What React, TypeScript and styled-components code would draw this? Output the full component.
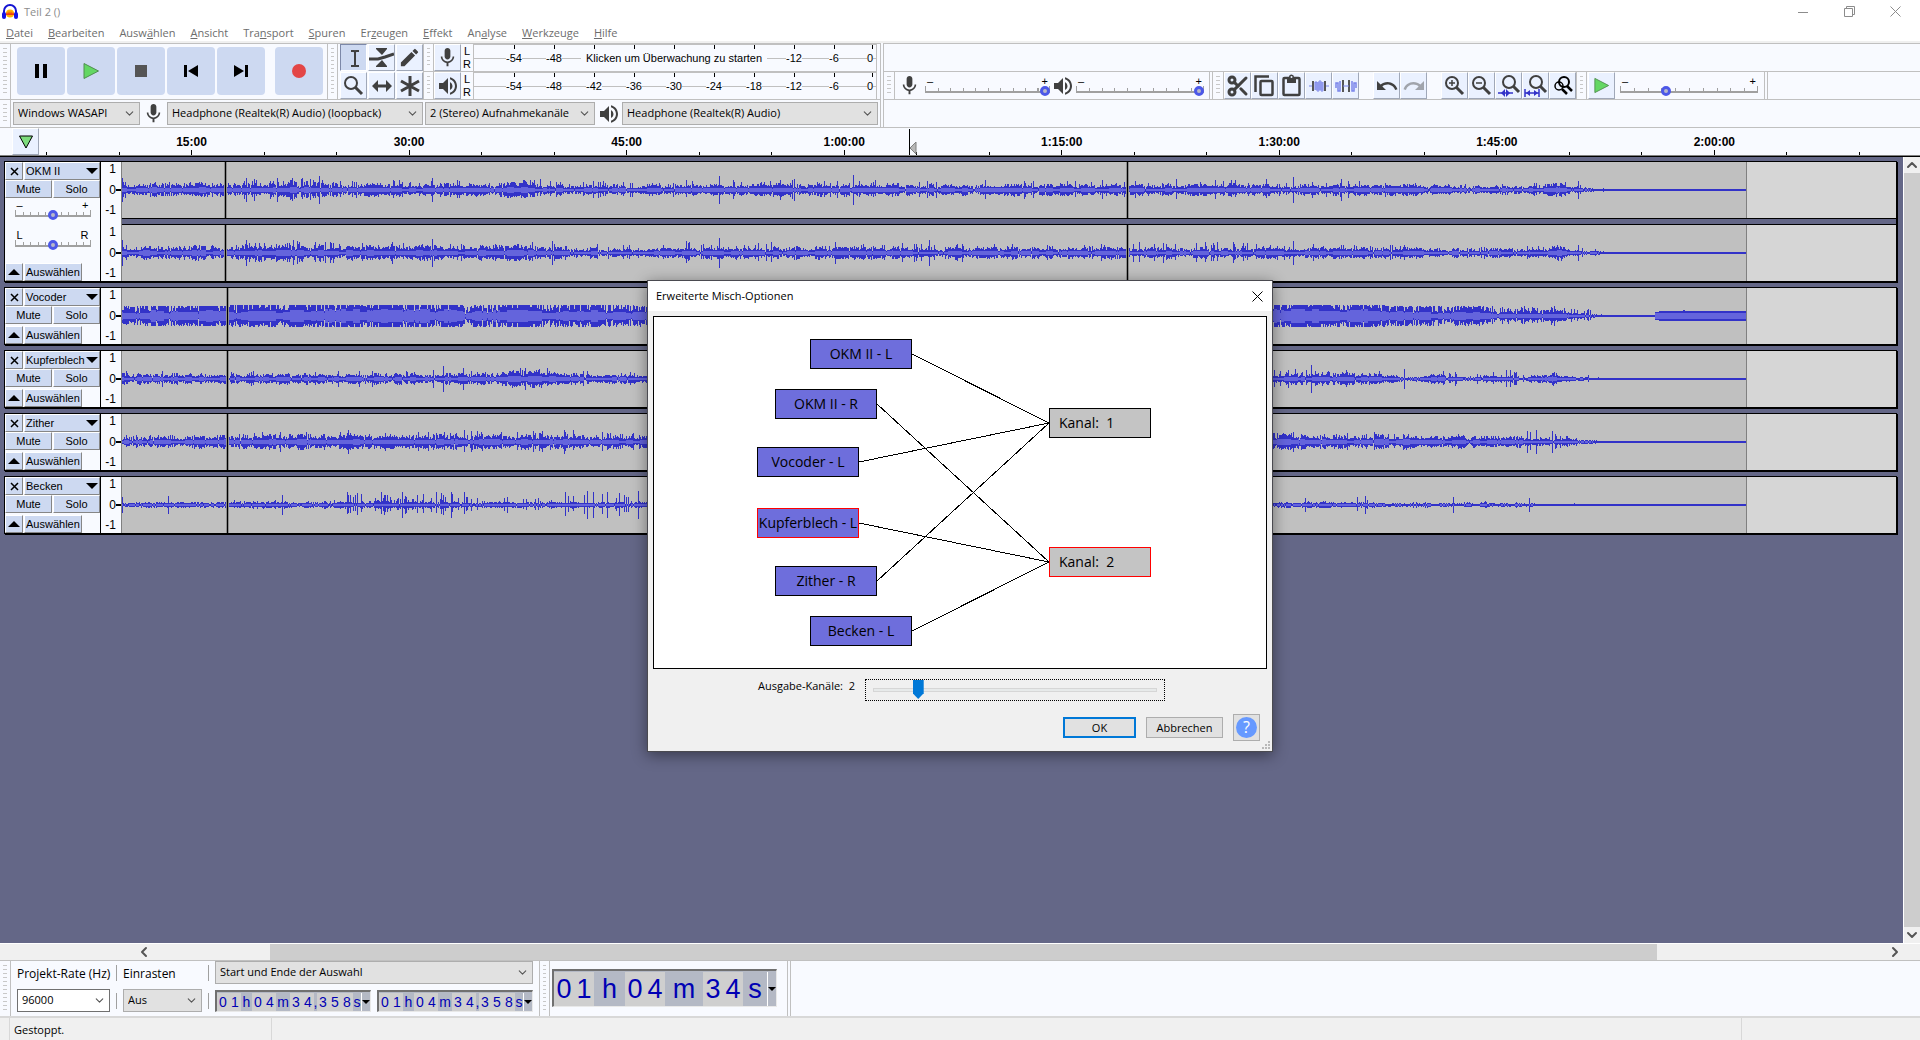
import React from "react";
import styled, { createGlobalStyle, css } from "styled-components";
import { ChevronDown, ChevronLeft, ChevronRight, ChevronUp, Scissors } from "lucide-react";
import { MdEdit, MdMic, MdRedo, MdUndo, MdVolumeUp } from "react-icons/md";

const ui = '"Open Sans", "Noto Sans", sans-serif';
const arial = '"Liberation Sans", Arial, sans-serif';
const line = "#c0c0c0";
const paper = "#f8faff";
const slate = "#646787";
const soft = "#cdd9f1";
const ink = "#404040";

const GlobalStyle = createGlobalStyle`
  * { box-sizing: border-box; }
  body { margin: 0; background: ${slate}; }
  button, select, input { font: inherit; color: inherit; margin: 0; padding: 0; border-radius: 0; }
  button { cursor: default; }
  svg { display: block; flex: none; }
`;

const Window = styled.div`
  position: relative;
  display: flex;
  flex-direction: column;
  height: 100vh;
  overflow: hidden;
  font: 11px/16px ${ui};
  color: #000;
`;

/* ---------- title and menu ---------- */

const TitleBar = styled.header`
  display: flex;
  align-items: center;
  gap: 6px;
  height: 23px;
  padding: 0 15px 0 2px;
  background: #fff;
  color: #8c8c8c;
`;
const Title = styled.h1`
  flex: 1;
  margin: 0;
  font: inherit;
`;
const WindowButtons = styled.div`
  display: flex;
  gap: 26px;
`;
const PlainButton = styled.button`
  display: flex;
  align-items: center;
  justify-content: center;
  width: 20px;
  height: 20px;
  border: 0;
  background: none;
`;
const MenuBar = styled.nav`
  display: flex;
  gap: 15px;
  height: 20px;
  padding: 2px 6px 0;
  border-bottom: 2px solid #f0f0f0;
  background: #fff;
`;
const MenuLink = styled.a`
  color: #6d6d6d;
  text-decoration: none;
`;

/* ---------- toolbars ---------- */

const Dock = styled.div`
  display: flex;
  background: ${paper};
`;
const DockLeft = styled.div`
  display: flex;
  flex-direction: column;
  border-right: 1px solid ${line};
`;
const DockRight = styled.div`
  display: flex;
  flex: 1;
  flex-direction: column;
  margin-left: 2px;
  border-left: 1px solid ${line};
`;
const DockRow = styled.div<{ $tall?: boolean }>`
  display: flex;
  height: ${(p) => (p.$tall ? 56 : 28)}px;
  border-top: 1px solid ${line};
`;
const Bar = styled.section<{ $gap?: number; $pad?: string; $top?: boolean }>`
  display: flex;
  align-items: ${(p) => (p.$top ? "flex-start" : "center")};
  gap: ${(p) => p.$gap ?? 0}px;
  padding: ${(p) => p.$pad ?? "0"};
`;
const Grabber = styled.div<{ $left?: boolean }>`
  align-self: stretch;
  flex: none;
  width: 11px;
  padding: 4px 3px;
  border-right: 1px solid ${line};
  border-left: ${(p) => (p.$left ? `1px solid ${line}` : "0")};
  background: repeating-linear-gradient(#c8c8c8 0 1px, transparent 1px 4px) content-box;
`;
const EndLine = styled.div`
  align-self: stretch;
  width: 4px;
  border: solid ${line};
  border-width: 0 1px;
`;
const TransportButton = styled.button<{ $apart?: boolean }>`
  display: flex;
  align-items: center;
  justify-content: center;
  width: 48px;
  height: 48px;
  margin-left: ${(p) => (p.$apart ? 8 : 0)}px;
  border: 0;
  border-radius: 4px;
  background: ${soft};
`;
const ToolGrid = styled.div`
  display: grid;
  grid-template-columns: repeat(3, 27px);
  gap: 1px;
`;
const ToolButton = styled.button<{ $down?: boolean }>`
  display: flex;
  align-items: center;
  justify-content: center;
  width: 27px;
  height: 27px;
  border: 1px solid;
  border-color: ${(p) => (p.$down ? "#7c88a8 #fff #fff #7c88a8" : "#fff #a0a8b8 #a0a8b8 #fff")};
  background: ${(p) => (p.$down ? soft : "#eaf1ff")};
  color: ${ink};
`;
const ButtonRun = styled.div`
  display: flex;
`;

const Meters = styled.div`
  display: flex;
  flex-direction: column;
  padding-right: 3px;
`;
const MeterRow = styled.section`
  display: flex;
  align-items: center;
  height: 27px;
  & + & {
    height: 28px;
    border-top: 1px solid ${line};
  }
`;
const ChannelNames = styled.div`
  width: 12px;
  font: 11px/13px ${arial};
  text-align: center;
`;
const MeterScale = styled.div`
  display: flex;
  justify-content: flex-end;
  position: relative;
  width: 404px;
  height: 27px;
  border: solid ${line};
  border-width: 1px 1px 0 1px;
  background: linear-gradient(${line}, ${line}) 0 13px / 100% 1px no-repeat;
  font: 11px/13px ${arial};
`;
const MeterMark = styled.div<{ $end?: boolean }>`
  display: flex;
  flex: none;
  flex-direction: column;
  align-items: ${(p) => (p.$end ? "flex-end" : "center")};
  width: ${(p) => (p.$end ? 22 : 40)}px;
  padding: 0 ${(p) => (p.$end ? 3 : 0)}px;
  &::before {
    content: "";
    width: 1px;
    height: 4px;
    margin-bottom: 3px;
    background: #000;
  }
`;
const MarkText = styled.span`
  background: ${paper};
`;
const MeterHint = styled.button`
  position: absolute;
  top: 5px;
  left: 107px;
  height: 16px;
  padding: 0 5px;
  border: 0;
  background: ${paper};
  white-space: nowrap;
`;

const SelectBox = styled.div<{ $w: number; $edit?: boolean }>`
  display: grid;
  width: ${(p) => p.$w}px;
  height: 23px;
  border: 1px solid ${(p) => (p.$edit ? "#707070" : "#adadad")};
  background: ${(p) => (p.$edit ? "#fff" : "#e1e1e1")};
  & > * {
    grid-area: 1 / 1;
  }
  & > svg {
    place-self: center end;
    margin-right: 3px;
    pointer-events: none;
    color: #555;
  }
`;
const fieldText = css`
  width: 100%;
  padding: 0 20px 1px 4px;
  border: 0;
  outline: 0;
  appearance: none;
  background: none;
`;
const NativeSelect = styled.select`
  ${fieldText}
`;
const NativeInput = styled.input`
  ${fieldText}
`;
const IconSlot = styled.span<{ $w: number }>`
  display: flex;
  justify-content: center;
  width: ${(p) => p.$w}px;
  color: ${ink};
`;

/* ---------- small sliders ---------- */

const SliderBox = styled.label<{ $w: number }>`
  display: flex;
  flex-direction: column;
  width: ${(p) => p.$w}px;
`;
const SliderEnds = styled.span`
  display: flex;
  justify-content: space-between;
  padding: 0 2px;
  font: 11px/10px ${arial};
`;
const knob = css`
  appearance: none;
  width: 10px;
  height: 10px;
  border: 3px solid #4c58e8;
  border-radius: 50%;
  background: #b8b8c8;
`;
const Range = styled.input`
  appearance: none;
  width: 100%;
  height: 10px;
  background:
    linear-gradient(#a0a0a0, #a0a0a0) 0 5px / 100% 2px no-repeat,
    repeating-linear-gradient(90deg, #a0a0a0 0 1px, transparent 1px 10%) 0 2px / 100% 3px no-repeat,
    linear-gradient(#a0a0a0, #a0a0a0) 100% 0 / 1px 5px no-repeat,
    linear-gradient(#a0a0a0, #a0a0a0) 0 0 / 1px 5px no-repeat;
  &::-webkit-slider-thumb {
    ${knob}
  }
`;

/* ---------- time ruler ---------- */

const Ruler = styled.div`
  display: flex;
  position: relative;
  height: 30px;
  border-top: 1px solid ${line};
  border-bottom: 1px solid #000;
  background: ${paper};
`;
const PinCell = styled.div`
  width: 39px;
  padding: 0 0 0 12px;
  border-bottom: 1px solid #808080;
`;
const RulerTicks = styled.div`
  display: flex;
  flex: 1;
  justify-content: space-between;
  align-items: flex-end;
  padding: 0 60px 0 7px;
  border-bottom: 1px solid #808080;
`;
const Tick = styled.div<{ $major?: boolean }>`
  display: flex;
  flex-direction: column;
  align-items: center;
  width: 1px;
  font: bold 12px/16px ${arial};
  &::after {
    content: "";
    width: 1px;
    height: ${(p) => (p.$major ? 5 : 3)}px;
    background: #000;
  }
`;
const PlayCursor = styled.div`
  position: absolute;
  top: 1px;
  left: 909px;
`;

/* ---------- tracks ---------- */

const Workspace = styled.main`
  display: flex;
  flex: 1;
  min-height: 0;
`;
const TrackList = styled.div`
  display: flex;
  flex: 1;
  flex-direction: column;
  gap: 5px;
  min-width: 0;
  padding: 4px 6px 0 4px;
  background: ${slate};
`;
const TrackRow = styled.article`
  display: flex;
  border: 1px solid #000;
  box-shadow: 1px 1px 0 #000;
`;
const Panel = styled.div`
  display: flex;
  flex-direction: column;
  width: 96px;
  border-right: 1px solid #000;
  background: ${paper};
`;
const PanelRow = styled.div<{ $last?: boolean }>`
  display: flex;
  gap: 1px;
  margin-top: ${(p) => (p.$last ? "auto" : "0")};
  padding-right: ${(p) => (p.$last ? 18 : 0)}px;
`;
const PanelButton = styled.button<{ $fixed?: boolean; $start?: boolean }>`
  display: flex;
  align-items: center;
  justify-content: ${(p) => (p.$start ? "space-between" : "center")};
  flex: ${(p) => (p.$fixed ? "none" : "1 1 0")};
  min-width: 0;
  width: ${(p) => (p.$fixed ? "18px" : "auto")};
  height: 18px;
  padding: ${(p) => (p.$start ? "0 1px" : "0")};
  overflow: hidden;
  border: 1px solid;
  border-color: #fff #868686 #868686 #fff;
  background: ${soft};
  font: 11px/16px ${arial};
`;
const PanelSliders = styled.div`
  display: flex;
  flex: 1;
  flex-direction: column;
  align-items: center;
  gap: 10px;
  padding-top: 2px;
`;
const Scales = styled.div`
  display: flex;
  flex-direction: column;
  gap: 7px;
  width: 21px;
  border-right: 1px solid #808080;
  background: ${paper};
`;
const Scale = styled.div`
  display: flex;
  flex-direction: column;
  justify-content: space-between;
  align-items: flex-end;
  height: 56px;
  padding: 0 5px 1px 0;
  background: linear-gradient(#000, #000) 100% 27px / 5px 2px no-repeat;
  font: 12px/14px ${arial};
`;
const Channels = styled.div`
  flex: 1;
  min-width: 0;
`;
const Channel = styled.div`
  height: 56px;
  overflow: hidden;
  background: #d6d6d6;
`;
const ChannelGap = styled.div`
  height: 7px;
  border: solid #000;
  border-width: 1px 0;
  background: ${slate};
`;

/* ---------- scroll bars ---------- */

const VScroll = styled.div`
  display: flex;
  flex-direction: column;
  align-items: center;
  width: 17px;
  border-left: 1px solid #fff;
  background: #f0f0f0;
  color: #555;
`;
const HScroll = styled.div`
  display: flex;
  align-items: center;
  height: 17px;
  padding-left: 136px;
  border-top: 1px solid #fff;
  background: #f0f0f0;
  color: #555;
`;
const Thumb = styled.div`
  flex: 1;
  width: 100%;
  background: #cdcdcd;
`;
const HTrack = styled.div`
  display: flex;
  flex: 1;
  align-self: stretch;
  padding: 0 230px 0 118px;
`;

/* ---------- selection bar ---------- */

const SelectionBar = styled.footer`
  display: flex;
  height: 58px;
  border-top: 1px solid ${line};
  border-bottom: 2px solid #d8d8d8;
  background: ${paper};
`;
const SelectionGrid = styled.div`
  display: grid;
  grid-template-columns: 93px 1px 79px 1px 318px;
  grid-template-rows: 23px 23px;
  align-items: center;
  gap: 5px 6px;
  padding: 0 6px 4px;
`;
const SelectionLabel = styled.label`
  padding-top: 2px;
  font-size: 12px;
  white-space: nowrap;
`;
const Divider = styled.div`
  width: 1px;
  height: 16px;
  background: #a0a0a0;
`;
const TimePair = styled.div`
  display: flex;
  gap: 6px;
`;
const TimeBox = styled.div<{ $big?: boolean }>`
  display: flex;
  height: ${(p) => (p.$big ? 38 : 22)}px;
  padding-top: 1px;
  border: solid;
  border-width: 2px 1px 1px 2px;
  border-color: #707070 #e8e8e8 #e8e8e8 #707070;
  background: #b4b9c5;
  color: #0000b4;
  font: ${(p) => (p.$big ? "27px/34px" : "14px/18px")} ${arial};
`;
const Digits = styled.span<{ $n: number; $big?: boolean }>`
  display: grid;
  grid-template-columns: repeat(${(p) => p.$n}, 1fr);
  width: ${(p) => p.$n * (p.$big ? 20 : 12)}px;
  background: #cfcfcf;
  text-align: center;
`;
const Unit = styled.span<{ $w: number }>`
  display: flex;
  justify-content: center;
  width: ${(p) => p.$w}px;
`;
const TimeMenu = styled.button`
  width: 9px;
  border: 0;
  border-left: 1px solid #fff;
  background: none;
`;
const BigTime = styled.div`
  display: flex;
  align-items: center;
  padding: 0 10px 2px 2px;
`;
const StatusBar = styled.div`
  display: flex;
  height: 22px;
  padding-left: 9px;
  background: #f0f0f0;
  line-height: 23px;
`;
const StatusCell = styled.div<{ $w?: number }>`
  width: ${(p) => (p.$w ? `${p.$w}px` : "auto")};
  flex: ${(p) => (p.$w ? "none" : 1)};
  padding-left: 4px;
  border-left: 1px solid #d8d8d8;
`;

/* ---------- dialog ---------- */

const Overlay = styled.div`
  display: flex;
  position: absolute;
  inset: 0;
  align-items: center;
  justify-content: center;
  padding-bottom: 8px;
`;
const Dialog = styled.div`
  display: flex;
  position: relative;
  flex-direction: column;
  width: 626px;
  border: 1px solid #4a4a50;
  background: #f0f0f0;
  box-shadow: 0 3px 14px rgba(0, 0, 0, 0.45);
`;
const DialogTitle = styled.div`
  display: flex;
  align-items: center;
  justify-content: space-between;
  height: 30px;
  padding: 0 5px 0 8px;
  background: #fff;
`;
const DialogName = styled.h2`
  margin: 0;
  font: inherit;
`;
const MixCanvas = styled.div`
  position: relative;
  height: 353px;
  margin: 5px 5px 0;
  border: 1px solid #000;
  background: #fff;
`;
const Node = styled.button<{ $x: number; $y: number; $kind: "track" | "channel"; $on?: boolean }>`
  position: absolute;
  left: ${(p) => p.$x}px;
  top: ${(p) => p.$y}px;
  width: 102px;
  height: 30px;
  padding: ${(p) => (p.$kind === "track" ? "0" : "0 0 0 9px")};
  border: 1px solid ${(p) => (p.$on ? "#f00" : "#000")};
  background: ${(p) => (p.$kind === "track" ? "#6e6edc" : "#c4c4c4")};
  font-size: 14px;
  line-height: 28px;
  text-align: ${(p) => (p.$kind === "track" ? "center" : "left")};
  white-space: pre;
`;
const ChannelRow = styled.div`
  display: flex;
  gap: 10px;
  padding: 10px 107px 0 0;
  justify-content: flex-end;
`;
const ChannelLabel = styled.label`
  line-height: 14px;
  white-space: pre;
`;
const DialogRange = styled.input`
  appearance: none;
  width: 300px;
  height: 22px;
  padding: 0 7px;
  border: 1px dotted #000;
  outline: 0;
  background: none;
  &::-webkit-slider-runnable-track {
    height: 4px;
    border: 1px solid #d6d6d6;
    background: #e7eaea;
  }
  &::-webkit-slider-thumb {
    appearance: none;
    width: 11px;
    height: 19px;
    margin-top: -9px;
    background: #0078d7;
    clip-path: polygon(0 0, 100% 0, 100% 70%, 50% 100%, 0 70%);
  }
`;
const DialogButtons = styled.div`
  display: flex;
  align-items: center;
  justify-content: flex-end;
  gap: 10px;
  padding: 13px 12px 10px;
`;
const DialogButton = styled.button<{ $w: number; $main?: boolean }>`
  width: ${(p) => p.$w}px;
  height: 21px;
  border: ${(p) => (p.$main ? "2px solid #0078d7" : "1px solid #adadad")};
  background: #e1e1e1;
  line-height: 15px;
`;
const HelpButton = styled.button`
  display: flex;
  align-items: center;
  justify-content: center;
  width: 27px;
  height: 27px;
  border: 1px solid #adadad;
  background: #e1e1e1;
`;
const HelpDisc = styled.span`
  width: 21px;
  height: 21px;
  border-radius: 50%;
  background: #6699ff;
  color: #fff;
  font-size: 16px;
  line-height: 21px;
`;
const Grip = styled.span`
  position: absolute;
  right: 2px;
  bottom: 2px;
`;

/* ---------- drawings ---------- */

const Svg = ({ w = 24, h = w, box, children }: { w?: number; h?: number; box?: string; children: React.ReactNode }) => (
  <svg width={w} height={h} viewBox={box ?? `0 0 ${w} ${h}`} aria-hidden="true">
    {children}
  </svg>
);

const Logo = () => (
  <Svg w={16}>
    <path d="M2 11V7a6 6 0 0 1 12 0v4" fill="none" stroke="#1414d2" strokeWidth="2" />
    <rect x="0" y="8" width="4" height="7" rx="2" fill="#1414e6" />
    <rect x="12" y="8" width="4" height="7" rx="2" fill="#1414e6" />
    <ellipse cx="8" cy="9.500" rx="4" ry="4" fill="#ffb400" />
    <path d="M4 10l1-2 1 2 1-3 1 3 1-3 1 3 1-2 1 2v1H4z" fill="#f03c14" />
  </Svg>
);
const PlayIcon = ({ size }: { size: number }) => (
  <Svg w={size} box="0 0 18 18">
    <path d="M2 1.500v15L16.500 9z" fill="#63d763" stroke="#4f8f4f" strokeWidth="1" />
  </Svg>
);
const DownTriangle = ({ w = 12, h = 6 }: { w?: number; h?: number }) => (
  <Svg w={w} h={h} box="0 0 12 6">
    <path d="M0 0h12L6 6z" fill="#000" />
  </Svg>
);
const Lens = ({ sign }: { sign?: string }) => (
  <Svg w={23}>
    <circle cx="9" cy="9" r="6" fill="none" stroke={ink} strokeWidth="2" />
    <path d="M13 13l7 7" stroke={ink} strokeWidth="3" />
    {sign && <path d={sign} stroke={ink} strokeWidth="1.500" />}
  </Svg>
);

const glyph = {
  pause: <Svg w={14}><path d="M1 0h4v14H1zM9 0h4v14H9z" /></Svg>,
  stop: <Svg w={12}><path d="M0 0h12v12H0z" fill="#555" /></Svg>,
  start: <Svg w={14}><path d="M0 1h3v12H0zM14 1v12L4 7z" /></Svg>,
  end: <Svg w={14}><path d="M11 1h3v12h-3zM0 1v12l10-6z" /></Svg>,
  record: <Svg w={14}><circle cx="7" cy="7" r="7" fill="#e34646" /></Svg>,
  cursor: (
    <Svg w={20}>
      <path d="M7 3h3l1 1 1-1h3M7 18h3l1-1 1 1h3M11 4v13" fill="none" stroke={ink} strokeWidth="2" />
    </Svg>
  ),
  envelope: (
    <Svg w={25}>
      <path d="M0 14h9l7-2 9-3" fill="none" stroke={ink} strokeWidth="3" />
      <path d="M7 3h11v1l-5 6-6-6zM7 22h11v-1l-5-6-6 6z" fill={ink} />
    </Svg>
  ),
  shift: (
    <Svg w={22}>
      <path d="M5 11h12" stroke={ink} strokeWidth="3" />
      <path d="M7 5v12l-6-6zM15 5v12l6-6z" fill={ink} />
    </Svg>
  ),
  multi: (
    <Svg w={22}>
      <path d="M11 1v20M2 6l18 10M20 6L2 16" stroke={ink} strokeWidth="3" />
    </Svg>
  ),
  copy: (
    <Svg w={23}>
      <path d="M2.500 18V2.500H16" fill="none" stroke={ink} strokeWidth="2.500" />
      <rect x="7.500" y="7" width="12" height="14" rx="1" fill="none" stroke={ink} strokeWidth="2.500" />
    </Svg>
  ),
  paste: (
    <Svg w={23}>
      <rect x="3.500" y="4" width="16" height="17" rx="1" fill="none" stroke={ink} strokeWidth="2.500" />
      <path d="M7 3h2a2.500 2.500 0 0 1 5 0h2v6H7z" fill={ink} />
      <circle cx="11.500" cy="3" r="1" fill="#eaf1ff" />
    </Svg>
  ),
  trim: (
    <Svg w={22}>
      <path d="M1 11h4M17 11h4" stroke="#7a84ea" strokeWidth="1" />
      <path d="M5 6v10M17 6v10" stroke="#555" strokeWidth="2" />
      <path d="M7 15V7h2v9h2V6h2v10h2V7" fill="none" stroke="#7a84ea" strokeWidth="1" />
      <path d="M7 7h8v8H7z" fill="#7a84ea" opacity="0.6" />
    </Svg>
  ),
  silence: (
    <Svg w={22}>
      <path d="M1 13V8h2v8h2V6M17 6v10h2V8h2v5" fill="none" stroke="#7a84ea" strokeWidth="1.500" />
      <path d="M8 5v12M14 5v12" stroke="#555" strokeWidth="2" />
      <path d="M8 11h6" stroke="#7a84ea" strokeWidth="1" />
    </Svg>
  ),
  zoomSelection: (
    <Svg w={25}>
      <circle cx="13" cy="9" r="6" fill="none" stroke={ink} strokeWidth="2" />
      <path d="M17 13l6 6" stroke={ink} strokeWidth="3" />
      <path d="M2 20h15" stroke="#3232c8" strokeWidth="1.500" />
      <path d="M9 16v8l-4-4zM10 16v8l4-4z" fill="#3232c8" />
    </Svg>
  ),
  zoomFit: (
    <Svg w={25}>
      <circle cx="13" cy="9" r="6" fill="none" stroke={ink} strokeWidth="2" />
      <path d="M17 13l6 6" stroke={ink} strokeWidth="3" />
      <path d="M2 20h14M2 16v8M16 16v8" stroke="#3232c8" strokeWidth="1.500" />
      <path d="M7 17v6l-4-3zM11 17v6l4-3z" fill="#3232c8" />
    </Svg>
  ),
  zoomToggle: (
    <Svg w={22}>
      <circle cx="12" cy="7" r="5" fill="none" stroke="#000" strokeWidth="2" />
      <circle cx="7" cy="11" r="4" fill="none" stroke="#000" strokeWidth="1.500" />
      <path d="M15 11l5 5M10 14l5 5" stroke="#000" strokeWidth="2.500" />
    </Svg>
  ),
};

/* ---------- wave forms ---------- */

// [x, body height, spike height, spike chance], heights in pixels either side of the axis
type Point = [number, number, number, number];

const END = 1624;
const QUIET = 1482;

function buildWave(points: Point[], seed: number, hits: [number, number][], rms: number) {
  let s = seed;
  const rnd = () => {
    s = (s * 1664525 + 1013904223) % 4294967296;
    return s / 4294967296;
  };
  let peak = "";
  let body = "";
  let swell = 1;
  for (let x = 0; x < QUIET; x++) {
    let i = 0;
    while (i < points.length - 2 && points[i + 1][0] <= x) i++;
    const a = points[i];
    const b = points[i + 1];
    const t = Math.min(1, (x - a[0]) / (b[0] - a[0]));
    const base = a[1] + (b[1] - a[1]) * t;
    if (x % 7 === 0) swell = 0.55 + rnd() * 0.5;
    let up = base * swell * (0.7 + rnd() * 0.6);
    let down = base * swell * (0.7 + rnd() * 0.6);
    if (rnd() < a[3] * 1.8) {
      const k = base + (a[2] - base) * Math.pow(rnd(), 1.5);
      up = Math.max(up, k);
      down = Math.max(down, k * (0.6 + rnd() * 0.4));
    }
    if (rnd() < 0.1) {
      up *= 0.5;
      down *= 0.5;
    }
    up = Math.min(up, a[2]);
    down = Math.min(down, a[2]);
    const hit = hits.find((h) => h[0] === x);
    if (hit) {
      up = hit[1];
      down = hit[1];
    }
    const u = Math.max(1, Math.round(up));
    const d = Math.max(1, Math.round(down));
    peak += `M${x} ${28 - u}h1v${u + d}h-1z`;
    const r = Math.round(Math.min(base * rms * swell, Math.min(u, d) - 1));
    if (r > 0) body += `M${x} ${28 - r}h1v${2 * r}h-1z`;
  }
  return { peak, body };
}

const okm: Point[] = [
  [0, 8, 13, 0.3], [5, 5, 6, 0.1], [20, 6, 8, 0.15], [104, 6, 9, 0.1], [110, 6, 11, 0.15], [170, 8, 13, 0.15],
  [220, 6, 10, 0.12], [345, 6, 9, 0.1], [400, 7, 11, 0.12], [433, 5, 9, 0.12], [510, 4, 9, 0.1], [560, 5, 12, 0.1],
  [620, 5, 11, 0.1], [760, 6, 12, 0.12], [800, 5, 10, 0.12], [1010, 5, 11, 0.12], [1150, 5, 9, 0.08], [1285, 5, 8, 0.08],
  [1300, 4, 6, 0.1], [1400, 4, 7, 0.1], [1420, 3, 7, 0.2], [1434, 8, 9, 0.1], [1446, 3, 6, 0.1], [1470, 2, 4, 0.1], [QUIET, 1, 3, 0.1],
];
const vocoder: Point[] = [
  [0, 11, 10, 0.3], [10, 9, 10, 0.3], [30, 12, 10, 0.3], [105, 12, 11, 0.3], [240, 15, 11, 0.2], [330, 15, 11, 0.2], [345, 9, 11, 0.3],
  [390, 13, 11, 0.3], [480, 12, 11, 0.3], [530, 8, 11, 0.3], [700, 11, 11, 0.3], [1150, 14, 11, 0.2], [1250, 14, 11, 0.3], [1264, 9, 10, 0.4],
  [1360, 9, 10, 0.3], [1380, 4, 10, 0.4], [1430, 5, 10, 0.3], [1450, 4, 8, 0.3], [1470, 2, 3, 0.1], [QUIET, 1, 2, 0.1],
];
const kupfer: Point[] = [
  [0, 6, 8, 0.3], [6, 3, 6, 0.2], [16, 5, 8, 0.1], [105, 4, 8, 0.1], [225, 5, 11, 0.1], [345, 5, 12, 0.12], [400, 8, 12, 0.15],
  [435, 6, 10, 0.1], [470, 4, 8, 0.1], [700, 5, 10, 0.1], [1150, 4, 10, 0.12], [1185, 6, 10, 0.1], [1240, 5, 9, 0.08], [1290, 2, 7, 0.1],
  [1310, 5, 8, 0.1], [1340, 2, 7, 0.15], [1380, 4, 9, 0.15], [1400, 2, 4, 0.1], [1430, 6, 7, 0.1], [1446, 3, 5, 0.1], [1470, 1, 3, 0.1], [QUIET, 1, 2, 0.1],
];
const zither: Point[] = [
  [0, 6, 8, 0.2], [10, 5, 7, 0.1], [105, 6, 10, 0.12], [225, 7, 11, 0.1], [310, 7, 12, 0.1], [480, 6, 10, 0.1], [700, 6, 10, 0.1],
  [1150, 7, 11, 0.12], [1280, 6, 8, 0.08], [1350, 5, 8, 0.15], [1400, 5, 11, 0.15], [1420, 4, 9, 0.1], [1450, 3, 9, 0.1], [1470, 2, 4, 0.1], [QUIET, 1, 2, 0.1],
];
const becken: Point[] = [
  [0, 3, 6, 0.1], [6, 2, 3, 0.1], [105, 3, 5, 0.1], [225, 3, 13, 0.25], [345, 3, 9, 0.08], [430, 3, 13, 0.1], [530, 3, 12, 0.1],
  [1150, 3, 4, 0.06], [1230, 3, 8, 0.08], [1270, 2, 4, 0.06], [1360, 2, 7, 0.08], [1400, 2, 6, 0.06], [1420, 1, 2, 0.1], [QUIET, 1, 1, 0.05],
];

const none: [number, number][] = [];
const hitsA: [number, number][] = [[0, 12], [124, 12], [132, 11], [155, 12], [197, 14], [310, 12], [597, 14], [672, 11], [731, 15], [1171, 13], [1219, 11], [1456, 9]];
const hitsB: [number, number][] = [[0, 13], [124, 13], [270, 11], [310, 14], [430, 12], [597, 15], [807, 13], [1171, 12], [1456, 8]];
const hitsK: [number, number][] = [[40, 8], [321, 13], [341, 11], [1189, 14], [1282, 10]];
const hitsZ: [number, number][] = [[158, 10], [226, 12], [442, 12], [1405, 11], [1414, 12], [1430, 11]];
const hitsC: [number, number][] = [[0, 8], [46, 9], [160, 10], [280, 13], [329, 13], [465, 14], [471, 13], [485, 13], [516, 14], [1183, 7], [1243, 9], [1331, 8], [1407, 7]];

interface WaveProps {
  points: Point[];
  seed: number;
  hits?: [number, number][];
  cuts: number[];
  rms?: number;
  tone?: boolean;
}
const Wave = ({ points, seed, hits = none, cuts, rms = 0.42, tone }: WaveProps) => {
  const { peak, body } = React.useMemo(() => buildWave(points, seed, hits, rms), [points, seed, hits, rms]);
  return (
    <svg width={END + 1} height="56" shapeRendering="crispEdges" aria-hidden="true">
      <path d={`M0 0h${END}v56H0z`} fill="#c0c0c0" />
      <path d={peak} fill="#3232c8" />
      <path d={`M${QUIET} 27h${END - QUIET}v2h-${END - QUIET}z`} fill="#3232c8" />
      <path d={body} fill="#6464dc" />
      {tone && (
        <>
          <path d="M1533 24h4v-1h24v-1h2v1h61v10h-87v-1h-4z" fill="#3232c8" />
          <path d="M1533 25h91v6h-91z" fill="#6464dc" />
        </>
      )}
      {cuts.map((x) => (
        <g key={x}>
          <path d={`M${x - 1} 0h3v56h-3z`} fill="#8c8c8c" />
          <path d={`M${x} 0h1v56h-1z`} fill="#000" />
        </g>
      ))}
      <path d={`M${END} 0h1v56h-1z`} fill="#808080" />
    </svg>
  );
};

/* ---------- composed parts ---------- */

const Select = ({ label, value, w, id }: { label: string; value: string; w: number; id?: string }) => (
  <SelectBox $w={w}>
    <NativeSelect id={id} aria-label={label} defaultValue={value}>
      <option>{value}</option>
    </NativeSelect>
    <ChevronDown size={13} strokeWidth={2} />
  </SelectBox>
);

const MiniSlider = ({ label, w, value, ends = ["–", "+"] }: { label: string; w: number; value: number; ends?: string[] }) => (
  <SliderBox $w={w}>
    <SliderEnds>
      <span>{ends[0]}</span>
      <span>{ends[1]}</span>
    </SliderEnds>
    <Range type="range" aria-label={label} defaultValue={value} />
  </SliderBox>
);

const Meter = ({ label, icon, hint }: { label: string; icon: React.ReactNode; hint?: string }) => (
  <MeterRow>
    <Grabber $left />
    <ToolButton aria-label={label}>{icon}</ToolButton>
    <ChannelNames>
      <div>L</div>
      <div>R</div>
    </ChannelNames>
    <MeterScale>
      {["-54", "-48", "-42", "-36", "-30", "-24", "-18", "-12", "-6", "0"].map((m) => (
        <MeterMark key={m} $end={m === "0"}>{!(hint && /-(42|36|30|24|18)/.test(m)) && <MarkText>{m}</MarkText>}</MeterMark>
      ))}
      {hint && <MeterHint>{hint}</MeterHint>}
    </MeterScale>
  </MeterRow>
);

const Track = ({ name, stereo, children }: { name: string; stereo?: boolean; children: React.ReactNode }) => {
  const waves = React.Children.toArray(children);
  return (
    <TrackRow>
      <Panel>
        <PanelRow>
          <PanelButton $fixed aria-label={`${name} schließen`}>
            <Svg w={9}><path d="M1 1l7 7M8 1L1 8" stroke="#000" strokeWidth="1.500" /></Svg>
          </PanelButton>
          <PanelButton $start>
            {name}
            <DownTriangle />
          </PanelButton>
        </PanelRow>
        <PanelRow>
          <PanelButton>Mute</PanelButton>
          <PanelButton>Solo</PanelButton>
        </PanelRow>
        {stereo && (
          <PanelSliders>
            <MiniSlider label="Lautstärke" w={76} value={50} />
            <MiniSlider label="Balance" w={76} value={50} ends={["L", "R"]} />
          </PanelSliders>
        )}
        <PanelRow $last>
          <PanelButton $fixed aria-label={`${name} einklappen`}>
            <Svg w={12} h={6}><path d="M0 6h12L6 0z" /></Svg>
          </PanelButton>
          <PanelButton $start>Auswählen</PanelButton>
        </PanelRow>
      </Panel>
      <Scales>
        {waves.map((_, i) => (
          <Scale key={i}>
            <span>1</span>
            <span>0</span>
            <span>-1</span>
          </Scale>
        ))}
      </Scales>
      <Channels>
        {waves.map((w, i) => (
          <React.Fragment key={i}>
            {i > 0 && <ChannelGap />}
            <Channel>{w}</Channel>
          </React.Fragment>
        ))}
      </Channels>
    </TrackRow>
  );
};

const digits = (text: string, big?: boolean) => (
  <Digits $n={text.length} $big={big}>
    {text.split("").map((c, i) => (
      <span key={i}>{c}</span>
    ))}
  </Digits>
);

const SmallTime = ({ label }: { label: string }) => (
  <TimeBox role="group" aria-label={label}>
    {digits("01")}
    <Unit $w={11}>h</Unit>
    {digits("04")}
    <Unit $w={14}>m</Unit>
    {digits("34")}
    <Unit $w={3}>,</Unit>
    {digits("358")}
    <Unit $w={8}>s</Unit>
    <TimeMenu aria-label="Format">
      <DownTriangle w={8} h={4} />
    </TimeMenu>
  </TimeBox>
);

const menus: [string, string, string][] = [
  ["", "D", "atei"], ["", "B", "earbeiten"], ["Ausw", "ä", "hlen"], ["", "A", "nsicht"], ["Tra", "n", "sport"], ["", "S", "puren"],
  ["Er", "z", "eugen"], ["", "E", "ffekt"], ["An", "a", "lyse"], ["", "W", "erkzeuge"], ["", "H", "ilfe"],
];
const times = ["15:00", "30:00", "45:00", "1:00:00", "1:15:00", "1:30:00", "1:45:00", "2:00:00"];

interface MixNode {
  name: string;
  x: number;
  y: number;
  to: number;
  on?: boolean;
}
const sources: MixNode[] = [
  { name: "OKM II - L", x: 156, y: 22, to: 0 },
  { name: "OKM II - R", x: 121, y: 72, to: 1 },
  { name: "Vocoder - L", x: 103, y: 130, to: 0 },
  { name: "Kupferblech - L", x: 103, y: 191, to: 1, on: true },
  { name: "Zither - R", x: 121, y: 249, to: 0 },
  { name: "Becken - L", x: 156, y: 299, to: 1 },
];
const outputs = [
  { name: "Kanal:  1", x: 395, y: 91 },
  { name: "Kanal:  2", x: 395, y: 230, on: true },
];

export default function App() {
  return (
    <Window>
      <GlobalStyle />
      <TitleBar>
        <Logo />
        <Title>Teil 2 ()</Title>
        <WindowButtons>
          <PlainButton aria-label="Minimieren"><Svg w={10}><path d="M0 5.500h10" stroke="#8c8c8c" /></Svg></PlainButton>
          <PlainButton aria-label="Verkleinern"><Svg w={11}><path d="M.5 2.500h8v8h-8zM2.500 2.500v-2h8v8h-2" fill="none" stroke="#8c8c8c" /></Svg></PlainButton>
          <PlainButton aria-label="Beenden"><Svg w={11}><path d="M.5.5l10 10M10.500.5l-10 10" stroke="#8c8c8c" /></Svg></PlainButton>
        </WindowButtons>
      </TitleBar>
      <MenuBar>
        {menus.map(([a, b, c]) => (
          <MenuLink key={a + b + c} href="#">{a}<u>{b}</u>{c}</MenuLink>
        ))}
      </MenuBar>

      <Dock>
        <DockLeft>
          <DockRow $tall>
            <Grabber />
            <Bar $top $gap={2} $pad="3px 4px 0 6px">
              <TransportButton aria-label="Pause">{glyph.pause}</TransportButton>
              <TransportButton aria-label="Wiedergabe"><PlayIcon size={18} /></TransportButton>
              <TransportButton aria-label="Stopp">{glyph.stop}</TransportButton>
              <TransportButton aria-label="Zum Anfang">{glyph.start}</TransportButton>
              <TransportButton aria-label="Zum Ende">{glyph.end}</TransportButton>
              <TransportButton $apart aria-label="Aufnahme">{glyph.record}</TransportButton>
            </Bar>
            <Grabber $left />
            <Bar $pad="0 0 0 2px">
              <ToolGrid>
                <ToolButton $down aria-label="Auswahlwerkzeug">{glyph.cursor}</ToolButton>
                <ToolButton aria-label="Hüllkurve">{glyph.envelope}</ToolButton>
                <ToolButton aria-label="Zeichnen"><MdEdit size={23} /></ToolButton>
                <ToolButton aria-label="Zoom"><Lens /></ToolButton>
                <ToolButton aria-label="Verschieben">{glyph.shift}</ToolButton>
                <ToolButton aria-label="Multi-Werkzeug">{glyph.multi}</ToolButton>
              </ToolGrid>
            </Bar>
            <Meters>
              <Meter label="Aufnahmepegel" icon={<MdMic size={23} />} hint="Klicken um Überwachung zu starten" />
              <Meter label="Wiedergabepegel" icon={<MdVolumeUp size={24} />} />
            </Meters>
          </DockRow>
          <DockRow>
            <Grabber />
            <Bar $gap={2} $pad="0 2px">
              <Select label="Audio-Host" value="Windows WASAPI" w={127} />
              <IconSlot $w={23}><MdMic size={23} /></IconSlot>
              <Select label="Aufnahmegerät" value="Headphone (Realtek(R) Audio) (loopback)" w={256} />
              <Select label="Aufnahmekanäle" value="2 (Stereo) Aufnahmekanäle" w={170} />
              <IconSlot $w={23}><MdVolumeUp size={24} /></IconSlot>
              <Select label="Wiedergabegerät" value="Headphone (Realtek(R) Audio)" w={256} />
            </Bar>
          </DockRow>
        </DockLeft>
        <DockRight>
          <DockRow />
          <DockRow>
            <Grabber />
            <Bar $gap={4} $pad="0 5px 0 2px">
              <IconSlot $w={24}><MdMic size={23} /></IconSlot>
              <MiniSlider label="Aufnahmelautstärke" w={125} value={100} />
              <IconSlot $w={18}><MdVolumeUp size={24} /></IconSlot>
              <MiniSlider label="Wiedergabelautstärke" w={128} value={100} />
            </Bar>
            <EndLine />
            <Grabber />
            <Bar $gap={14}>
              <ButtonRun>
                <ToolButton aria-label="Ausschneiden"><Scissors size={24} strokeWidth={3} /></ToolButton>
                <ToolButton aria-label="Kopieren">{glyph.copy}</ToolButton>
                <ToolButton aria-label="Einfügen">{glyph.paste}</ToolButton>
                <ToolButton aria-label="Zuschneiden">{glyph.trim}</ToolButton>
                <ToolButton aria-label="Stille">{glyph.silence}</ToolButton>
              </ButtonRun>
              <ButtonRun>
                <ToolButton aria-label="Rückgängig"><MdUndo size={24} /></ToolButton>
                <ToolButton aria-label="Wiederholen"><MdRedo size={24} color="#a0a4ac" /></ToolButton>
              </ButtonRun>
              <ButtonRun>
                <ToolButton aria-label="Vergrößern"><Lens sign="M6 9h6M9 6v6" /></ToolButton>
                <ToolButton aria-label="Verkleinern"><Lens sign="M6 9h6" /></ToolButton>
                <ToolButton aria-label="Auswahl einpassen">{glyph.zoomSelection}</ToolButton>
                <ToolButton aria-label="Projekt einpassen">{glyph.zoomFit}</ToolButton>
                <ToolButton aria-label="Zoom umschalten">{glyph.zoomToggle}</ToolButton>
              </ButtonRun>
            </Bar>
            <Grabber $left />
            <Bar $gap={5} $pad="0 6px 0 1px">
              <ToolButton aria-label="Mit Geschwindigkeit abspielen"><PlayIcon size={17} /></ToolButton>
              <MiniSlider label="Geschwindigkeit" w={138} value={32} />
            </Bar>
            <EndLine />
          </DockRow>
          <DockRow />
        </DockRight>
      </Dock>

      <Ruler>
        <PinCell>
          <ToolButton aria-label="Abspielkopf">
            <Svg w={16}><path d="M1.500 2h13L8 14z" fill="#7ddc7d" stroke="#000" strokeWidth="1" /></Svg>
          </ToolButton>
        </PinCell>
        <RulerTicks>
          {Array.from({ length: 26 }, (_, i) => (
            <Tick key={i} $major={i % 3 === 2}>{i % 3 === 2 && <span>{times[(i - 2) / 3]}</span>}</Tick>
          ))}
        </RulerTicks>
        <PlayCursor>
          <Svg w={8} h={26}>
            <path d="M7 13v12L1 19z" fill="#b8b8b8" stroke="#808080" />
            <path d="M0 0h1v26H0z" />
          </Svg>
        </PlayCursor>
      </Ruler>

      <Workspace>
        <TrackList>
          <Track name="OKM II" stereo>
            <Wave points={okm} seed={7} hits={hitsA} cuts={[103, 1005]} />
            <Wave points={okm} seed={21} hits={hitsB} cuts={[103, 1005]} />
          </Track>
          <Track name="Vocoder">
            <Wave points={vocoder} seed={33} cuts={[105]} rms={0.48} tone />
          </Track>
          <Track name="Kupferblech">
            <Wave points={kupfer} seed={45} hits={hitsK} cuts={[105]} />
          </Track>
          <Track name="Zither">
            <Wave points={zither} seed={58} hits={hitsZ} cuts={[105]} />
          </Track>
          <Track name="Becken">
            <Wave points={becken} seed={69} hits={hitsC} cuts={[105]} />
          </Track>
        </TrackList>
        <VScroll>
          <ChevronUp size={16} strokeWidth={3} />
          <Thumb />
          <ChevronDown size={16} strokeWidth={3} />
        </VScroll>
      </Workspace>

      <HScroll>
        <ChevronLeft size={16} strokeWidth={3} />
        <HTrack>
          <Thumb />
        </HTrack>
        <ChevronRight size={16} strokeWidth={3} />
        <IconSlot $w={17} />
      </HScroll>

      <SelectionBar>
        <Grabber />
        <SelectionGrid>
          <SelectionLabel htmlFor="rate">Projekt-Rate (Hz)</SelectionLabel>
          <Divider />
          <SelectionLabel htmlFor="snap">Einrasten</SelectionLabel>
          <Divider />
          <Select label="Auswahlart" value="Start und Ende der Auswahl" w={318} />
          <SelectBox $w={93} $edit>
            <NativeInput id="rate" defaultValue="96000" />
            <ChevronDown size={13} strokeWidth={2} />
          </SelectBox>
          <Divider />
          <Select id="snap" label="Einrasten" value="Aus" w={79} />
          <Divider />
          <TimePair>
            <SmallTime label="Start der Auswahl" />
            <SmallTime label="Ende der Auswahl" />
          </TimePair>
        </SelectionGrid>
        <Grabber $left />
        <BigTime>
          <TimeBox $big role="group" aria-label="Audioposition">
            {digits("01", true)}
            <Unit $w={31}>h</Unit>
            {digits("04", true)}
            <Unit $w={38}>m</Unit>
            {digits("34", true)}
            <Unit $w={24}>s</Unit>
            <TimeMenu aria-label="Format">
              <DownTriangle w={8} h={4} />
            </TimeMenu>
          </TimeBox>
        </BigTime>
        <EndLine />
      </SelectionBar>
      <StatusBar>
        <StatusCell $w={262}>Gestoppt.</StatusCell>
        <StatusCell />
        <StatusCell $w={179} />
      </StatusBar>

      <Overlay>
        <Dialog role="dialog" aria-label="Erweiterte Misch-Optionen">
          <DialogTitle>
            <DialogName>Erweiterte Misch-Optionen</DialogName>
            <PlainButton aria-label="Schließen"><Svg w={11}><path d="M.5.5l10 10M10.500.5l-10 10" stroke="#000" /></Svg></PlainButton>
          </DialogTitle>
          <MixCanvas>
            <svg width="100%" height="100%" shapeRendering="crispEdges" aria-hidden="true">
              {sources.map((n) => (
                <line key={n.name} x1={n.x + 102} y1={n.y + 15} x2={outputs[n.to].x} y2={outputs[n.to].y + 15} stroke="#000" />
              ))}
            </svg>
            {sources.map((n) => (
              <Node key={n.name} $x={n.x} $y={n.y} $kind="track" $on={n.on}>{n.name}</Node>
            ))}
            {outputs.map((n) => (
              <Node key={n.name} $x={n.x} $y={n.y} $kind="channel" $on={n.on}>{n.name}</Node>
            ))}
          </MixCanvas>
          <ChannelRow>
            <ChannelLabel htmlFor="channels">{"Ausgabe-Kanäle:  2"}</ChannelLabel>
            <DialogRange id="channels" type="range" min={1} max={8} defaultValue={2} />
          </ChannelRow>
          <DialogButtons>
            <DialogButton $w={73} $main>OK</DialogButton>
            <DialogButton $w={77}>Abbrechen</DialogButton>
            <HelpButton aria-label="Hilfe"><HelpDisc>?</HelpDisc></HelpButton>
          </DialogButtons>
          <Grip>
            <Svg w={8}><path d="M6 0h2v2H6zM3 3h2v2H3zM6 3h2v2H6zM0 6h2v2H0zM3 6h2v2H3zM6 6h2v2H6z" fill="#b8b8b8" /></Svg>
          </Grip>
        </Dialog>
      </Overlay>
    </Window>
  );
}
